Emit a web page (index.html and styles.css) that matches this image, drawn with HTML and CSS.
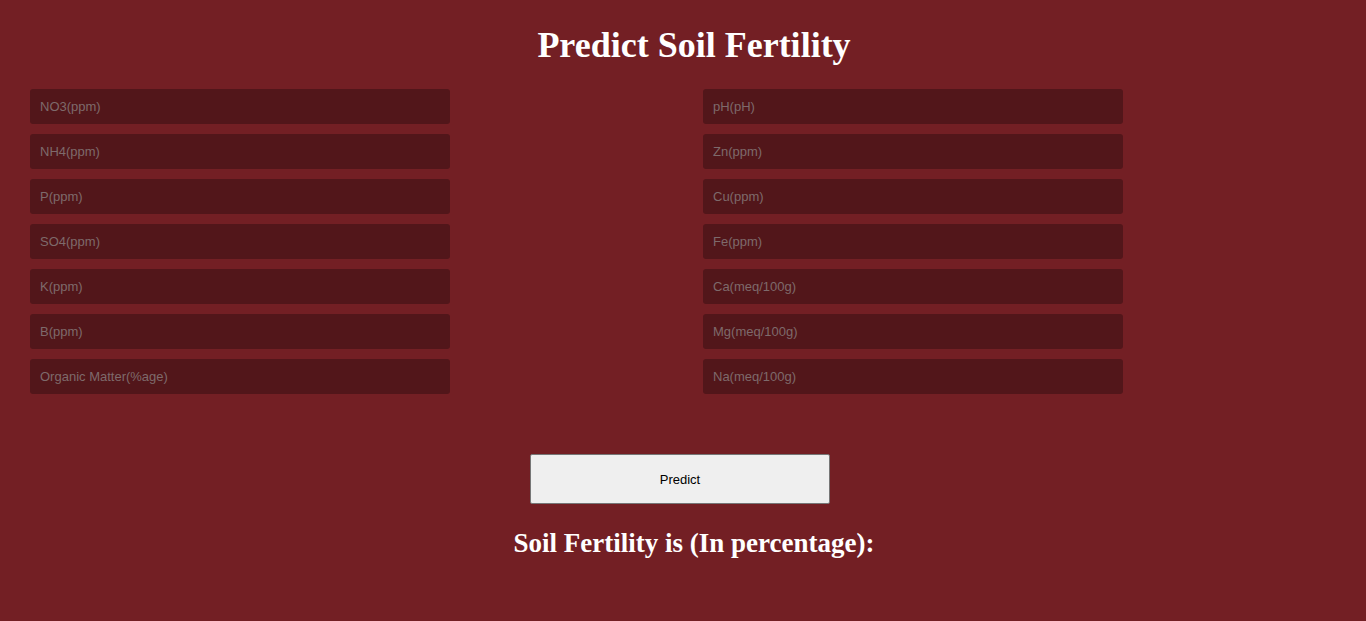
FILE: index.html
```html
<!DOCTYPE html>
<html>
<head>
<meta charset="utf-8">
<link rel="stylesheet" href="styles.css">
</head>
<body>
<div class="page">
  <h1 class="title">Predict Soil Fertility</h1>
  <form class="form">
    <div class="grid">
      <div class="col">
        <input class="field" placeholder="NO3(ppm)">
        <input class="field" placeholder="NH4(ppm)">
        <input class="field" placeholder="P(ppm)">
        <input class="field" placeholder="SO4(ppm)">
        <input class="field" placeholder="K(ppm)">
        <input class="field" placeholder="B(ppm)">
        <input class="field" placeholder="Organic Matter(%age)">
      </div>
      <div class="col">
        <input class="field" placeholder="pH(pH)">
        <input class="field" placeholder="Zn(ppm)">
        <input class="field" placeholder="Cu(ppm)">
        <input class="field" placeholder="Fe(ppm)">
        <input class="field" placeholder="Ca(meq/100g)">
        <input class="field" placeholder="Mg(meq/100g)">
        <input class="field" placeholder="Na(meq/100g)">
      </div>
    </div>
    <div class="actions">
      <button type="button" class="btn">Predict</button>
    </div>
  </form>
  <h2 class="result">Soil Fertility is (In percentage):</h2>
</div>
</body>
</html>
```
FILE: styles.css
```css
html, body {
  margin: 0;
  padding: 0;
  background: #731f24;
  height: 100%;
}
.page {
  display: flex;
  flex-direction: column;
  font-family: "Liberation Serif", serif;
}
.title {
  margin: 25px 0 0 0;
  text-align: center;
  color: #ffffff;
  font-size: 36px;
  font-weight: bold;
  line-height: 40px;
  padding-left: 22px;
}
.form {
  margin-top: 24px;
}
.grid {
  display: flex;
  padding-left: 30px;
  gap: 253px;
}
.col {
  display: flex;
  flex-direction: column;
  gap: 10px;
}
.field {
  box-sizing: border-box;
  width: 420px;
  height: 35px;
  margin: 0;
  border: none;
  border-radius: 3px;
  background: #52161a;
  padding: 0 10px;
  font-family: "Liberation Sans", Arial, sans-serif;
  font-size: 13px;
  color: #ccc;
  outline: none;
}
.field::placeholder {
  color: #7e6a6b;
}
.actions {
  display: flex;
  justify-content: center;
  margin-top: 60px;
  padding-right: 6px;
}
.btn {
  box-sizing: border-box;
  width: 300px;
  height: 50px;
  background: #efefef;
  border: 1px solid #767676;
  border-radius: 2px;
  font-family: "Liberation Sans", Arial, sans-serif;
  font-size: 13px;
  color: #000;
}
.result {
  margin: 24px 0 0 0;
  text-align: center;
  color: #ffffff;
  font-size: 27px;
  font-weight: bold;
  line-height: 30px;
  padding-left: 22px;
}
```
